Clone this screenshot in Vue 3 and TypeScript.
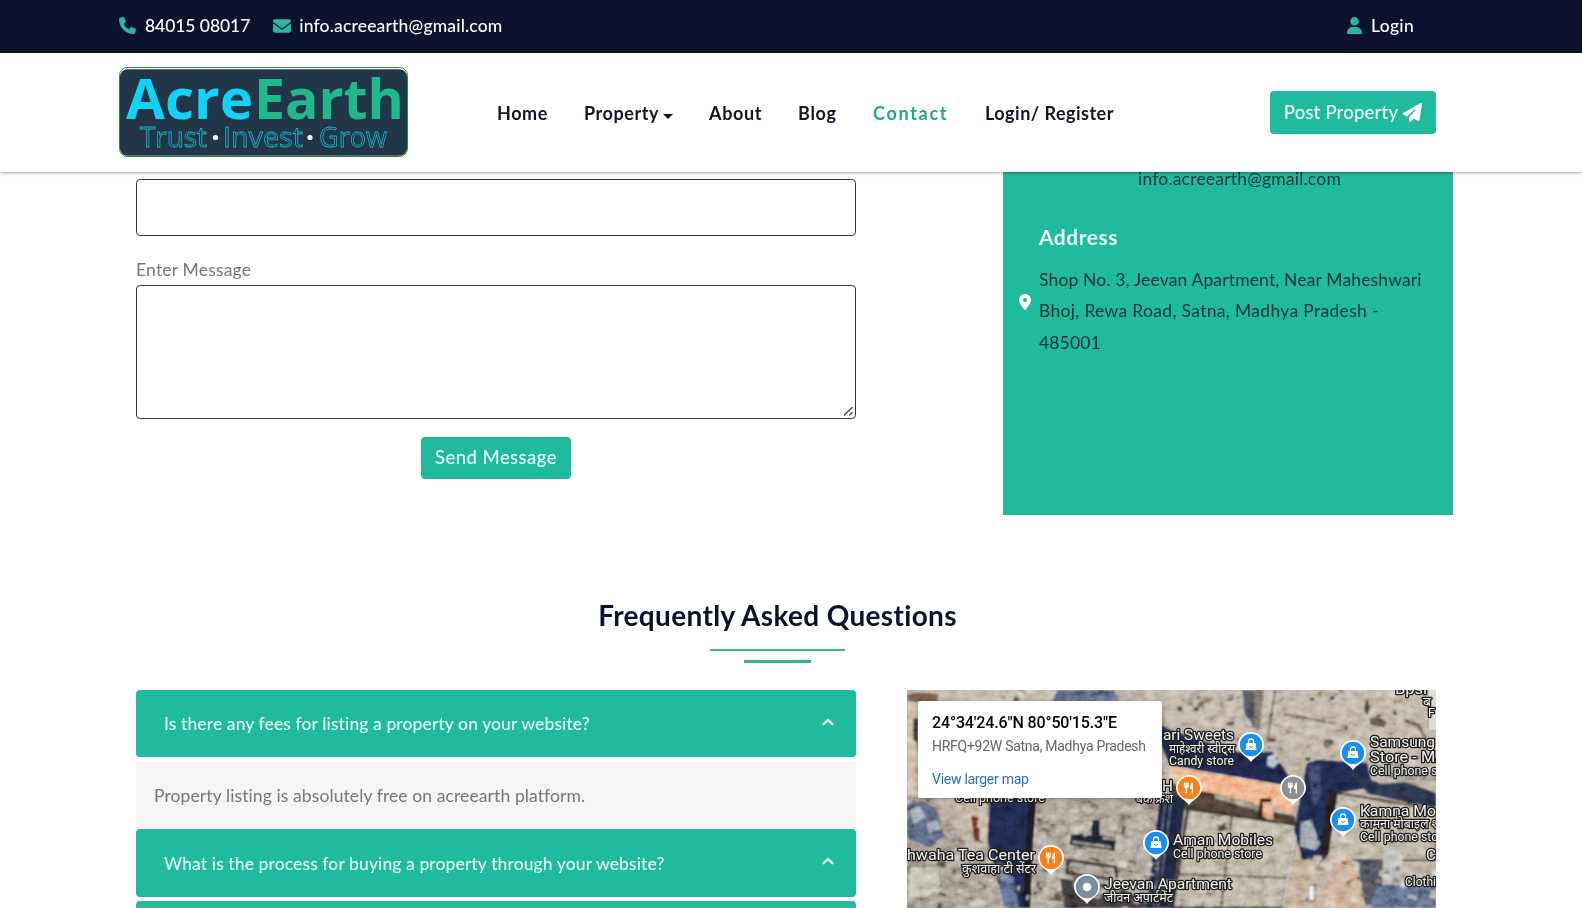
<script setup lang="ts">
interface Faq {
  question: string
  answer?: string
}

interface Marker {
  x: number
  y: number
  kind: 'shop' | 'food' | 'place'
  color: string
}

interface MapLabel {
  x: number
  y: number
  size: number
  width: number
  text: string
}

interface Patch {
  x: number
  y: number
  w: number
  h: number
  angle: number
  fill: string
}

const faqs: Faq[] = [
  {
    question: 'Is there any fees for listing a property on your website?',
    answer: 'Property listing is absolutely free on acreearth platform.',
  },
  { question: 'What is the process for buying a property through your website?' },
  { question: '' },
]

const markers: Marker[] = [
  { x: 344, y: 55, kind: 'shop', color: '#1a8ff0' },
  { x: 446, y: 63, kind: 'shop', color: '#1a8ff0' },
  { x: 436, y: 130, kind: 'shop', color: '#1a8ff0' },
  { x: 249, y: 153, kind: 'shop', color: '#1a8ff0' },
  { x: 144, y: 168, kind: 'food', color: '#f5821f' },
  { x: 282, y: 98, kind: 'food', color: '#f5821f' },
  { x: 386, y: 98, kind: 'food', color: '#8d8f93' },
  { x: 180, y: 197, kind: 'place', color: '#78909c' },
]

const labels: MapLabel[] = [
  { x: 256, y: 50, size: 15.5, width: 71, text: 'ari Sweets' },
  { x: 262, y: 63, size: 12, width: 66, text: 'माहेश्वरी स्वीट्स' },
  { x: 262, y: 75, size: 12.5, width: 65, text: 'Candy store' },
  { x: 463, y: 57, size: 15.5, width: 65, text: 'Samsung' },
  { x: 463, y: 72, size: 15.5, width: 76, text: 'Store - MA' },
  { x: 463, y: 85, size: 12.5, width: 89, text: 'Cell phone store' },
  { x: 453, y: 126, size: 15.5, width: 76, text: 'Kamna Mo' },
  { x: 453, y: 138, size: 12, width: 80, text: 'कामना मोबाइल श' },
  { x: 453, y: 151, size: 12.5, width: 89, text: 'Cell phone store' },
  { x: 266, y: 155, size: 15.5, width: 100, text: 'Aman Mobiles' },
  { x: 266, y: 168, size: 12.5, width: 89, text: 'Cell phone store' },
  { x: 197, y: 199, size: 15.5, width: 128, text: 'Jeevan Apartment' },
  { x: 197, y: 212, size: 12, width: 69, text: 'जीवन अपार्टमेंट' },
  { x: 0, y: 170, size: 15.5, width: 128, text: 'hwaha Tea Center' },
  { x: 55, y: 183, size: 12, width: 74, text: 'कुशवाहा टी सेंटर' },
  { x: 48, y: 112, size: 12.5, width: 90, text: 'Cell phone store' },
  { x: 255, y: 101, size: 15.5, width: 11, text: 'H' },
  { x: 229, y: 113, size: 12, width: 37, text: 'बेक फ्रेश' },
  { x: 498, y: 196, size: 12.5, width: 31, text: 'Clothi' },
  { x: 519, y: 170, size: 15.5, width: 10, text: 'C' },
  { x: 488, y: 4, size: 15.5, width: 32, text: 'Bpsl' },
  { x: 516, y: 16, size: 12, width: 8, text: 'ब' },
  { x: 521, y: 27, size: 12.5, width: 7, text: 'F' },
]

let seed = 41
const random = (): number => {
  seed = (seed * 16807) % 2147483647
  return seed / 2147483647
}

// Small rooftops, tanks and shade scattered over one block of the aerial view
const scatter = (x: number, y: number, w: number, h: number, count: number): Patch[] =>
  Array.from({ length: count }, () => ({
    x: x + random() * w,
    y: y + random() * h,
    w: 2 + random() * 9,
    h: 1.5 + random() * 6,
    angle: 8 + random() * 8,
    fill: ['#2b2828', '#5b5148', '#d2cbc0', '#c4bbad', '#81766b', '#d8d4cd', '#b0a698'][Math.floor(random() * 7)],
  }))

const patches: Patch[] = [
  ...scatter(128, 110, 120, 100, 85),
  ...scatter(60, 165, 30, 50, 12),
  ...scatter(0, 160, 60, 55, 18),
  ...scatter(100, 185, 160, 32, 26),
  ...scatter(416, 165, 112, 50, 34),
  ...scatter(310, 128, 24, 14, 8),
  ...scatter(432, 108, 90, 50, 12),
  ...scatter(60, 0, 70, 10, 12),
  ...scatter(255, 0, 80, 12, 10),
  ...scatter(395, 165, 20, 12, 8),
]
</script>

<template>
  <div class="page">
    <div class="topbar">
      <div class="contact-info">
        <span class="item">
          <svg class="ic" viewBox="0 0 512 512" width="17" height="17"><path fill="#26b9a0" d="M164.900 24.600c-7.700-18.600-28-28.500-47.400-23.200l-88 24C12.100 30.200 0 46 0 64c0 247.400 200.600 448 448 448 18 0 33.800-12.100 38.600-29.500l24-88c5.300-19.400-4.600-39.700-23.200-47.400l-96-40c-16.300-6.800-35.200-2.100-46.300 11.600L304.700 368C234.300 334.700 177.300 277.700 144 207.300l49.300-40.300c13.700-11.200 18.400-30 11.600-46.300l-40-96z"/></svg>
          <span class="phone">84015 08017</span>
        </span>
        <span class="item mail-item">
          <svg class="ic" viewBox="0 64 512 384" width="18" height="14"><path fill="#26b9a0" d="M48 64C21.500 64 0 85.500 0 112c0 15.100 7.100 29.300 19.200 38.400L236.800 313.600c11.400 8.500 27 8.500 38.400 0l217.600-163.200c12.100-9.100 19.200-23.300 19.200-38.400 0-26.500-21.500-48-48-48H48zM0 176v208c0 35.300 28.700 64 64 64h384c35.300 0 64-28.700 64-64V176L294.400 339.200a64 64 0 0 1-76.800 0L0 176z"/></svg>
          <span class="mail">info.acreearth@gmail.com</span>
        </span>
      </div>
      <span class="item login">
        <svg class="ic" viewBox="0 0 448 512" width="15" height="17"><path fill="#26b9a0" d="M224 256a128 128 0 1 0 0-256 128 128 0 1 0 0 256zm-45.700 48C79.800 304 0 383.800 0 482.300 0 498.700 13.300 512 29.700 512h388.600c16.400 0 29.700-13.300 29.700-29.700 0-98.500-79.800-178.300-178.300-178.300h-91.400z"/></svg>
        <span>Login</span>
      </span>
    </div>

    <header class="header">
      <svg class="logo" width="289" height="90" viewBox="0 0 289 90">
        <rect x=".5" y=".5" width="288" height="89" rx="8" fill="#fff" stroke="#2c8a35"/>
        <rect x="1" y="2.200" width="287" height="86.500" rx="7.500" fill="#213647"/>
        <g class="brand">
          <text x="7" y="51.500" textLength="127" lengthAdjust="spacingAndGlyphs" fill="#12d3f7">Acre</text>
          <text x="135" y="51.500" textLength="150" lengthAdjust="spacingAndGlyphs" fill="#1fb98b">Earth</text>
        </g>
        <g class="tagline">
          <text x="21" y="80" textLength="67" lengthAdjust="spacingAndGlyphs">Trust</text>
          <text x="104" y="80" textLength="80" lengthAdjust="spacingAndGlyphs">Invest</text>
          <text x="200" y="80" textLength="68" lengthAdjust="spacingAndGlyphs">Grow</text>
        </g>
        <circle cx="96.500" cy="70.500" r="2.600" fill="#fff"/>
        <circle cx="191" cy="70.500" r="2.600" fill="#fff"/>
      </svg>
      <nav class="nav">
        <a class="home">Home</a>
        <a class="property">Property<i class="caret"></i></a>
        <a class="about">About</a>
        <a class="blog">Blog</a>
        <a class="contact">Contact</a>
        <a class="register">Login/ Register</a>
      </nav>
      <button class="btn post">
        <span>Post Property</span>
        <svg viewBox="0 0 512 512" width="19" height="19"><path fill="#fff" d="M498.100 5.600c10.100 7 15.400 19.100 13.500 31.200l-64 416c-1.500 9.700-7.400 18.200-16 23s-18.900 5.400-28 1.600L284 427.700l-68.500 74.100c-8.900 9.700-22.900 12.900-35.200 8.100S160 493.200 160 480v-83.600c0-4 1.500-7.800 4.200-10.700L331.800 202.800c5.800-6.300 5.600-16-.4-22s-15.700-6.400-22-.7L106 360.800 17.700 316.600C7.100 311.300.3 300.700 0 288.900s5.900-22.800 16.100-28.700l448-256c10.700-6.100 23.900-5.500 34 1.400z"/></svg>
      </button>
    </header>

    <main class="content">
      <section class="top-row">
        <form class="form" @submit.prevent>
          <div class="input"></div>
          <label class="label">Enter Message</label>
          <div class="textarea">
            <svg class="grip" width="11" height="11" viewBox="0 0 11 11"><path d="M1 9.500 9.500 1M6.200 9.500 9.500 6.200" stroke="#444" stroke-width="1.300" fill="none"/></svg>
          </div>
          <button class="btn send" type="button">Send Message</button>
        </form>
        <aside class="card">
          <div class="card-mail">info.acreearth@gmail.com</div>
          <div class="address">
            <svg class="pin" viewBox="0 0 384 512" width="12" height="16"><path fill="#fff" fill-rule="evenodd" d="M215.700 499.200C267 435 384 279.400 384 192 384 86 298 0 192 0S0 86 0 192c0 87.400 117 243 168.300 307.200 12.300 15.300 35.100 15.300 47.400 0zM192 128a64 64 0 1 1 0 128 64 64 0 1 1 0-128z"/></svg>
            <div>
              <h3>Address</h3>
              <p>Shop No. 3, Jeevan Apartment, Near Maheshwari<br><span class="second-line">Bhoj, Rewa Road, Satna, Madhya Pradesh -</span><br>485001</p>
            </div>
          </div>
        </aside>
      </section>

      <section class="heading">
        <h2>Frequently Asked Questions</h2>
        <div class="rule long"></div>
        <div class="rule short"></div>
      </section>

      <section class="bottom-row">
        <div class="accordion">
          <template v-for="(faq, i) in faqs" :key="i">
            <div class="question">
              <span>{{ faq.question }}</span>
              <svg v-if="faq.question" width="12" height="8" viewBox="0 0 12 8"><path d="M1.500 6.200 6 2l4.500 4.200" fill="none" stroke="#e6fffa" stroke-width="2.400" stroke-linecap="round" stroke-linejoin="round"/></svg>
            </div>
            <div v-if="faq.answer" class="answer">{{ faq.answer }}</div>
          </template>
        </div>

        <div class="map">
          <svg class="aerial" width="529" height="218" viewBox="0 0 529 218">
            <defs>
              <filter id="grain" x="0" y="0" width="100%" height="100%">
                <feTurbulence type="fractalNoise" baseFrequency="0.1 0.13" numOctaves="4" seed="9"/>
                <feColorMatrix values="0.9 0.9 0 0 -0.42  0.9 0.9 0 0 -0.42  0.9 0.9 0 0 -0.42  0 0 0 0 1"/>
              </filter>
              <filter id="soft"><feGaussianBlur stdDeviation=".8"/></filter>
            </defs>
            <rect width="529" height="218" fill="#b0a597"/>
            <g filter="url(#soft)">
              <path d="M0 0h150v12H0z" fill="#b9afa2"/>
              <path d="M0 5c12-4 24-3 32 0l-2 7H0z" fill="#6b5142"/>
              <path d="M0 12h11v94H0z" fill="#c3b09b"/>
              <path d="M6 28h5v26l-5-4z" fill="#38302d"/>
              <path d="M150 0h57l6 12h-68z" fill="#59617c"/>
              <path d="M0 106h84l10 112H0z" fill="#998f84"/>
              <path d="M0 114c10-5 26-3 31 8l6 24-14 12-23-10z" fill="#555d75"/>
              <path d="M2 120l10-4 6 10-11 8zM20 132l9-2 5 9-12 4z" fill="#99a0ae"/>
              <path d="M2 176h30l2 20-14 12H0z" fill="#b9b8ab" stroke="#3b3935"/>
              <path d="M26 106h54v52l-18 2z" fill="#b3a593"/>
              <path d="M28 120l20 32" stroke="#5a5248" fill="none"/>
              <path d="M64 125l8 2-2 10 6 2v14l-9-2z" fill="#642d27"/>
              <path d="M72 128h10v22h-9z" fill="#c9b6a8"/>
              <path d="M83 106h47l-4 44-3 68H98L80 150z" fill="#1b2546"/>
              <path d="M122 106h8l-4 44-3 68h-7l2-50z" fill="#17171f"/>
              <path d="M92 180l14 6 6 32H96z" fill="#596887"/>
              <path d="M130 106h124v112H126z" fill="#9e958a"/>
              <path d="M168 134l22 4 18 6 16 6-2 14-58-8z" fill="#aaa59c"/>
              <path d="M164 144l20 1 1-16 8 1v15l16 2-1 14-46-6z" fill="#1e2029"/>
              <path d="M166 152l38 5M196 148l12 1" stroke="#9a948c" stroke-width="2" fill="none"/>
              <path d="M161 170l48 7 1 13-50-7z" fill="#968f86" stroke="#27262a" stroke-width="3"/>
              <path d="M153 188l57 8 44 22h-97z" fill="#383537"/>
              <path d="M262 0h81l-6 42-78-12z" fill="#b8ad9f"/>
              <path d="M360 0h169v95l-70-27-106-13z" fill="#b6ab9c"/>
              <path d="M343 0h14l-4 40-8-2z" fill="#6d685f"/>
              <path d="M335 0h12v36l-10-12z" fill="#4b4e5a"/>
              <path d="M368 0l-8 53M377 24l52 10" stroke="#4f473f" stroke-width="2" fill="none"/>
              <path d="M462 28c5-3 15 0 18 5l-3 5-14-3z" fill="#574d46"/>
              <path d="M418 50c5-3 9 0 9 4l-7 5-5-4z" fill="#6c5c4f"/>
              <path d="M497 30l14 5 12 22" stroke="#65594c" stroke-width="4" fill="none"/>
              <path d="M243 30l25 12 62 20h36l20 31-10 2-113-20z" fill="#1a2342"/>
              <path d="M361 67l9-4-2 8 6-1-8 8-6-3z" fill="#b3bacb"/>
              <path d="M263 77l113 19 10 2v27l-21-10-2-7h-10v12l-50-15-40-17z" fill="#efaa7c"/>
              <path d="M263 93l44 11 48 16v9l-25 4-63-17z" fill="#463a33"/>
              <path d="M308 103l43 11v7l-44-13z" fill="#918777"/>
              <path d="M353 108h12v4h-6v18h-9z" fill="#2a1d19"/>
              <path d="M356 112l9 3 3 14-12-2z" fill="#e5a27a"/>
              <path d="M366 122l22 4v8l-22-5z" fill="#40362f"/>
              <path d="M253 106h26l-14 112h-26z" fill="#1a2138"/>
              <path d="M258 112l-11 104M264 113l-13 104" stroke="#66728c" stroke-width="1" fill="none"/>
              <path d="M281 119l109 16-14 83H266z" fill="#b3ab9b" stroke="#332f2b" stroke-width="3"/>
              <path d="M325 125l-11 93M271 184l108 4" stroke="#423b33" stroke-width="2" fill="none"/>
              <path d="M390 135l-14 83" stroke="#d8d2c7" stroke-width="2" fill="none"/>
              <path d="M393 135h11l12 83h-36z" fill="#b8a38c"/>
              <path d="M400 73l12-3 48 3 6 24-36 6-14 54-3 13h-18l-8-30z" fill="#1c2646"/>
              <path d="M401 75h12l1 30-8 15z" fill="#35415e"/>
              <path d="M394 132l10-2 9 24-5 6-15-4z" fill="#8f97a4"/>
              <path d="M430 103l99 17v50H420z" fill="#b3ab9a" stroke="#1f1a19" stroke-width="2"/>
              <path d="M422 100l8 3-10 64-9 9z" fill="#241b1b"/>
              <path d="M440 80l34 14 24-2 31 11v15l-67-14z" fill="#252d42"/>
              <path d="M480 70l49 14v8l-55-4z" fill="#908f87"/>
              <path d="M424 165h20l14 53h-42z" fill="#c4a488"/>
              <path d="M450 170h26v45h-18z" fill="#4a4c52"/>
              <path d="M477 156h18v42h-20z" fill="#b0b2ad"/>
              <path d="M470 195l59-3v26h-66z" fill="#57627a"/>
              <path d="M402 195h6v16h-7z" fill="#eee" stroke="#3a302a"/>
              <rect v-for="(p, i) in patches" :key="i" :x="p.x" :y="p.y" :width="p.w" :height="p.h" :fill="p.fill" opacity=".7" :transform="`rotate(${p.angle} ${p.x} ${p.y})`"/>
              <g fill="#4e453e">
                <ellipse cx="273" cy="19" rx="3" ry="2.500"/><ellipse cx="289" cy="19" rx="3" ry="2.500"/>
                <ellipse cx="323" cy="34" rx="4" ry="2"/><ellipse cx="405" cy="9" rx="3" ry="2"/>
                <ellipse cx="425" cy="8" rx="3" ry="2"/><ellipse cx="439" cy="38" rx="2" ry="3"/>
                <ellipse cx="460" cy="17" rx="2.500" ry="8"/><ellipse cx="488" cy="23" rx="2" ry="3"/>
                <ellipse cx="365" cy="50" rx="4" ry="2.500"/><ellipse cx="401" cy="69" rx="3" ry="2"/>
              </g>
            </g>
            <rect class="grain" width="529" height="218" filter="url(#grain)"/>
            <rect x="522" y="0" width="7" height="40" fill="#dedbd7"/>

            <g class="map-labels">
              <text v-for="(l, i) in labels" :key="i" :x="l.x" :y="l.y" :font-size="l.size" :textLength="l.width" lengthAdjust="spacingAndGlyphs">{{ l.text }}</text>
            </g>

            <g v-for="(m, i) in markers" :key="i" :transform="`translate(${m.x} ${m.y})`">
              <path d="M0 17C-3 12-13 9-13 0a13 13 0 1 1 26 0C13 9 3 12 0 17z" fill="#fff"/>
              <circle r="11.200" :fill="m.color"/>
              <template v-if="m.kind === 'shop'">
                <path d="M-4.500-2h9L5.500 5h-11z" fill="#fff"/>
                <path d="M-2.500-2v-1.500a2.500 2.500 0 0 1 5 0V-2" fill="none" stroke="#fff" stroke-width="1.300"/>
                <path d="M-2 1a2.200 2.200 0 0 0 4 0" fill="none" :stroke="m.color"/>
              </template>
              <template v-else-if="m.kind === 'food'">
                <path d="M-4.500-5.500v4M-2.700-5.500v4M-.9-5.500v4M-2.700-1v6.500M3.300 0v5.500" fill="none" stroke="#fff" stroke-width="1.300"/>
                <path d="M-5.100-2.500h4.800c0 2-1 2.800-2.400 2.800s-2.400-.8-2.400-2.800zM4-5.700V1H1.200C1-2.500 2-5 4-5.700z" fill="#fff"/>
              </template>
              <circle v-else r="4.300" fill="#fff"/>
            </g>
          </svg>
          <div class="popup">
            <strong>24°34'24.6"N 80°50'15.3"E</strong>
            <span class="place">HRFQ+92W Satna, Madhya Pradesh</span>
            <a>View larger map</a>
          </div>
        </div>
      </section>
    </main>
  </div>
</template>

<style>
body { margin: 0; }
</style>

<style scoped>
.page {
  width: 1582px;
  height: 908px;
  overflow: hidden;
  background: #fff;
  font-family: Lato, "Open Sans", sans-serif;
  font-size: 17.500px;
  color: #777;
}
.topbar {
  height: 53px;
  box-sizing: border-box;
  padding: 0 168px 2px 119px;
  display: flex;
  justify-content: space-between;
  align-items: center;
  background: #0c122e;
  color: #fff;
  font-weight: 500;
}
.contact-info, .item { display: flex; align-items: center; }
.item { gap: 9px; line-height: 22px; }
.phone { letter-spacing: -.06px; }
.mail-item { margin-left: 23px; gap: 8px; }
.mail { letter-spacing: .17px; }
.login { letter-spacing: .3px; }

.header {
  height: 119px;
  position: relative;
  z-index: 1;
  display: flex;
  align-items: flex-start;
  background: #fff;
  box-shadow: 0 1px 3px rgba(0, 0, 0, .36);
}
.logo { margin: 14px 0 0 119px; flex: none; }
.brand { font: 700 56px "Open Sans", sans-serif; }
.tagline { font: 400 28px "Open Sans", sans-serif; fill: #213647; stroke: #1bb7d8; stroke-width: .8px; }
.nav {
  width: 775px;
  margin: 49px 0 0 89px;
  display: flex;
  color: #12142a;
  font-size: 18px;
  font-weight: 700;
  line-height: 22px;
  letter-spacing: .55px;
  white-space: nowrap;
}
.nav a { flex: none; }
.home { width: 87px; }
.property { width: 125px; }
.about { width: 89px; letter-spacing: .65px; }
.blog { width: 75px; letter-spacing: .7px; }
.contact { width: 112px; color: #1fa984; letter-spacing: 1.7px; }
.register { letter-spacing: .48px; }
.caret {
  display: inline-block;
  margin-left: 4px;
  vertical-align: 1px;
  border: 5px solid transparent;
  border-top-color: currentColor;
  border-bottom: 0;
}
.btn {
  border: 0;
  border-radius: 4px;
  background: #1fbb9c;
  color: #ecfffb;
  font: 500 18.500px/22px Lato, sans-serif;
  display: flex;
  align-items: center;
  justify-content: center;
}
.post { width: 166px; height: 43px; margin: 38px 0 0 -2px; padding: 0; gap: 5px; letter-spacing: .2px; flex: none; }
.post span { padding-bottom: 2px; }

.top-row { height: 343px; display: flex; align-items: flex-start; }
.form { width: 720px; margin: 7px 147px 0 136px; display: flex; flex-direction: column; }
.input, .textarea { box-sizing: border-box; border: 1px solid #393939; border-radius: 4px; background: #fff; }
.input { height: 57px; }
.label { line-height: 22px; margin: 23px 0 4px; letter-spacing: .19px; }
.textarea { height: 134px; display: flex; align-items: flex-end; justify-content: flex-end; }
.grip { margin: 0 1px 1px 0; }
.send { width: 150px; height: 42px; margin: 18px auto 0 285px; padding: 0 0 2px; letter-spacing: .43px; }
.card { width: 450px; height: 343px; background: #1fbb9c; color: #14343a; }
.card-mail { margin-left: 135px; line-height: 22px; margin-top: -4px; letter-spacing: .2px; }
.address { display: flex; margin: 34px 0 0 16px; gap: 8px; }
.pin { margin-top: 70px; flex: none; }
.address h3 { margin: 0; color: #e9fffb; font-size: 21px; line-height: 26px; font-weight: 700; letter-spacing: .5px; }
.address p { margin: 13.500px 0 0; line-height: 31.500px; letter-spacing: .15px; white-space: nowrap; }
.second-line { letter-spacing: .32px; }

.heading { height: 175px; display: flex; flex-direction: column; align-items: center; padding-right: 27px; box-sizing: border-box; }
.heading h2 { margin: 82px 0 0; color: #0c122e; font-size: 28px; line-height: 36px; font-weight: 700; letter-spacing: .33px; }
.rule { background: #36b297; }
.long { width: 135px; height: 2px; margin-top: 16px; }
.short { width: 67px; height: 3px; margin-top: 9px; }

.bottom-row { display: flex; align-items: flex-start; }
.accordion { width: 720px; margin: 0 51px 0 136px; }
.question {
  height: 67px;
  margin-bottom: 5px;
  box-sizing: border-box;
  padding: 0 22px 0 28px;
  border-radius: 4px;
  display: flex;
  align-items: center;
  justify-content: space-between;
  background: #1fbb9c;
  color: #e2fff8;
  font-weight: 500;
  letter-spacing: .1px;
}
.question svg { margin-bottom: 4px; }
.answer { height: 67px; line-height: 67px; padding-left: 18px; background: #f5f5f5; letter-spacing: .1px; }
.answer + .question { height: 68px; margin-bottom: 4px; }

.map { width: 529px; height: 218px; position: relative; overflow: hidden; }
.aerial { display: block; }
.grain { mix-blend-mode: overlay; opacity: .45; }
.map-labels { font-family: Roboto, "Noto Sans", sans-serif; fill: #f0f0f0; stroke: #202020; stroke-width: 2.600px; stroke-linejoin: round; paint-order: stroke; }
.popup {
  position: absolute;
  left: 11px;
  top: 11px;
  width: 244px;
  height: 97px;
  box-sizing: border-box;
  padding: 12px 0 0 14px;
  display: flex;
  flex-direction: column;
  background: #fff;
  border-radius: 2px;
  box-shadow: 0 1px 4px rgba(0, 0, 0, .3);
  font: 14px/20px Roboto, sans-serif;
  white-space: nowrap;
}
.popup strong { color: #000; font-size: 16px; font-weight: 500; letter-spacing: -.14px; }
.popup .place { margin-top: 3px; color: #666; letter-spacing: -.27px; }
.popup a { margin-top: 13px; color: #2c6fc0; letter-spacing: -.27px; }
</style>
